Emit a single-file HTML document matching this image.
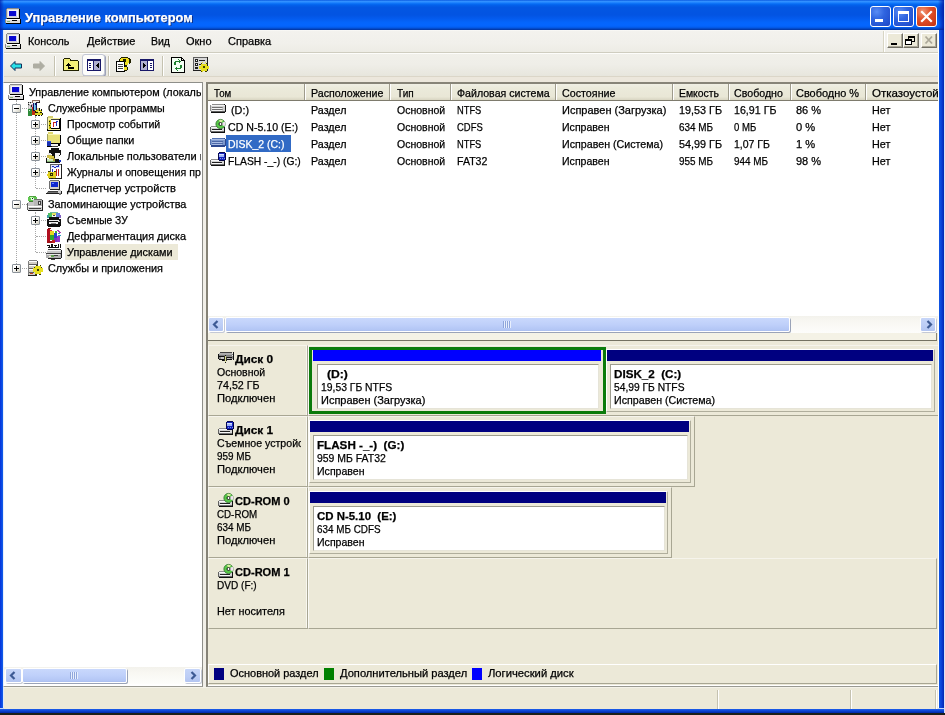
<!DOCTYPE html>
<html lang="ru">
<head>
<meta charset="utf-8">
<title>Управление компьютером</title>
<style>
html,body{margin:0;padding:0;}
body{width:945px;height:715px;overflow:hidden;position:relative;background:#1c1f1a;font-family:"Liberation Sans",sans-serif;font-size:11px;color:#000;line-height:13px;}
div,span,svg{position:absolute;box-sizing:border-box;}
b{font-weight:bold;}
.t{white-space:nowrap;transform-origin:0 50%;-webkit-text-stroke:0.25px currentColor;}
#root{left:0;top:0;width:945px;height:715px;overflow:hidden;will-change:transform;background:#1c1f1a;}
#win{left:0;top:0;width:944px;height:713px;background:#ece9d8;}
#edge{left:944px;top:0;width:1px;height:713px;background:#d4e0f6;}
#title{left:0;top:0;width:944px;height:30px;background:linear-gradient(to bottom,#0958e0 0%,#3391ff 4.5%,#2a8bff 7%,#147bfb 10%,#0569f2 14%,#035de8 19%,#0356e2 25%,#0354e2 50%,#045bee 62%,#0465fb 74%,#0466ff 84%,#0360f4 90%,#0351d8 94%,#0340b4 97%,#0234a0 100%);}
#title .t{left:25px;top:10px;color:#fff;font-weight:bold;font-size:13px;line-height:16px;text-shadow:1px 1px 0 #0a2a80;}
.cb{top:6px;width:21px;height:21px;border:1px solid #fff;border-radius:3px;background:radial-gradient(circle at 30% 25%,#5a8cf4 0,#2f64e0 40%,#1d46c6 100%);}
.cb.cx{background:radial-gradient(circle at 30% 25%,#f09878 0,#e0502a 40%,#c2300e 100%);}
#bl{left:0;top:30px;width:4px;height:683px;background:linear-gradient(to right,#0831d9 0,#0a4fe6 50%,#1660e8 75%,#dfe8fb 76%);}
#br{left:938px;top:30px;width:6px;height:683px;background:linear-gradient(to right,#fff 0,#fff 17%,#1057e4 18%,#0a3fd6 60%,#0326b0 100%);}
#bb{left:0;top:708px;width:944px;height:5px;background:linear-gradient(to bottom,#c0d4f8 0,#c0d4f8 20%,#1c5eea 21%,#0a42d4 60%,#0227a4 100%);}
#menu{left:4px;top:30px;width:934px;height:22px;background:linear-gradient(to bottom,#fbfbf9 0,#f3f2ee 6%,#f1f0eb 60%,#edece5 100%);}
.mi{top:5px;}
.mb{top:3px;width:16px;height:15px;background:#ece9d8;border-top:1px solid #fff;border-left:1px solid #fff;border-right:1px solid #716f64;border-bottom:1px solid #716f64;box-shadow:inset -1px -1px 0 #aca899;}
#tool{left:4px;top:52px;width:934px;height:24px;background:linear-gradient(to bottom,#f1f0ea 0,#efeee8 50%,#e7e6dd 100%);border-top:1px solid #cfcdc0;box-shadow:inset 0 1px 0 #fdfdfb;}
#tool2{left:4px;top:76px;width:934px;height:6px;background:#ece7dc;border-top:1px solid #dbd6c8;}
.ts{top:3px;width:2px;height:20px;border-left:1px solid #c5c2b0;border-right:1px solid #fff;}
.hot{background:#fdfdfb;border:1px solid #c2c6d4;border-radius:3px;box-shadow:1px 1px 0 #9da2b8;}
/* panes */
#tree{left:3px;top:82px;width:200px;height:605px;background:#fff;border-top:1px solid #8e8f8a;border-left:1px solid #e8eefb;border-right:1px solid #8f8f8a;border-bottom:1px solid #9a9a92;overflow:hidden;}
#split{left:203px;top:82px;width:3px;height:605px;background:#f1efe8;}
#rp{left:206px;top:82px;width:732px;height:605px;background:#ece9d8;border-top:2px solid #878478;border-left:2px solid #858276;border-bottom:1px solid #9a9a92;overflow:hidden;}
.tl{height:16px;line-height:16px;}
.ic{width:16px;height:16px;}
.pm{width:9px;height:9px;border:1px solid #8b9299;background:linear-gradient(135deg,#fff 0,#fff 35%,#d2cfc0 100%);border-radius:1px;}
.pm:before{content:"";position:absolute;left:1px;top:3px;width:5px;height:1px;background:#000;}
.pm.p:after{content:"";position:absolute;left:3px;top:1px;width:1px;height:5px;background:#000;}
.dv{width:1px;border-left:1px dotted #a8a8a8;}
.dh{height:1px;border-top:1px dotted #a8a8a8;}
/* scrollbars */
.sb{height:17px;background:linear-gradient(to bottom,#f3f2ec 0,#f8f7f2 30%,#fdfdfb 100%);}
.sbb{top:1px;width:16px;height:15px;border:1px solid #fff;border-radius:2px;background:linear-gradient(to bottom,#c6d5f8 0,#bccdf5 60%,#b2c4f0 100%);box-shadow:1px 1px 0 #c4c9d6;}
.sbt{top:1px;height:15px;border:1px solid #fff;border-radius:2px;background:linear-gradient(to bottom,#c9d8fc 0,#bfd0fa 50%,#b3c6f5 90%,#a9bdee 100%);box-shadow:1px 1px 0 #9aa3b8;}
.grip{top:3px;width:8px;height:7px;background:repeating-linear-gradient(to right,#8fa6dc 0,#8fa6dc 1px,#e8effd 1px,#e8effd 2px);}
/* list */
#lv{left:0;top:0;width:730px;height:249px;background:#fff;}
#lh{left:0;top:0;width:730px;height:17px;background:linear-gradient(to bottom,#f0efe4 0,#ebeadb 25%,#e9e7d6 80%,#d8d5c2 100%);border-bottom:1px solid #7e7b6d;}
.hs{top:0;width:2px;height:16px;border-left:1px solid #9e9b8c;border-right:1px solid #fff;}
.ht{top:2px;line-height:14px;}
.lr{left:0;height:17px;line-height:17px;width:731px;}
.lr .t{top:1px;}
/* disks */
.dlab{overflow:hidden;border-top:1px solid #f6f4ec;border-left:1px solid #f6f4ec;border-bottom:1px solid #a8a693;border-right:1px solid #a8a693;box-shadow:inset -1px 0 0 #f8f7f0;}
.dlab .t{left:8px;}
.dclip{left:0;top:0;width:92px;height:68px;overflow:hidden;}
.dbox{border-top:1px solid #f6f4ec;border-left:1px solid #fbfaf6;border-bottom:1px solid #a8a693;border-right:1px solid #a8a693;}
.part{border-top:1px solid #fff;border-left:1px solid #fff;border-bottom:1px solid #b0ae9c;border-right:1px solid #b0ae9c;}
.pw{background:#fff;border-top:1px solid #9d9c8e;border-left:1px solid #9d9c8e;border-right:1px solid #e6e4d8;border-bottom:1px solid #e6e4d8;}
.pw .t{left:3px;}
#leg{left:0;top:580px;width:729px;height:20px;border-top:1px solid #fff;border-left:1px solid #fff;border-right:1px solid #a8a693;border-bottom:1px solid #a8a693;}
#status{left:4px;top:687px;width:934px;height:22px;background:#ece9d8;border-top:1px solid #f4f2e8;}
#tl{left:0;top:0;width:4px;height:30px;background:linear-gradient(to right,rgba(0,30,170,.75),rgba(0,40,190,0));}
#trr{left:938px;top:0;width:6px;height:30px;background:linear-gradient(to right,rgba(0,30,170,0),rgba(0,25,160,.85));}
</style>
</head>
<body>
<div id="root">
<div id="win"></div>
<div id="edge"></div>
<div id="title">
<div id="tl"></div><div id="trr"></div>
<div class="ic" style="left:5px;top:8px"><svg width="16" height="16" viewBox="0 0 16 16" shape-rendering="crispEdges" style="left:0;top:0" ><rect x="2" y="0" width="12" height="1" fill="#8a8a8a"/><rect x="1" y="1" width="1" height="9" fill="#8a8a8a"/><rect x="2" y="1" width="12" height="9" fill="#d8d8d4"/><rect x="14" y="1" width="1" height="10" fill="#000"/><rect x="3" y="2" width="10" height="7" fill="#f4f4f4"/><rect x="4" y="3" width="7" height="5" fill="#0808d0"/><rect x="11" y="3" width="1" height="5" fill="#c8c8ff"/><rect x="4" y="8" width="8" height="1" fill="#c8c8e0"/><rect x="2" y="10" width="12" height="1" fill="#000"/><rect x="0" y="11" width="1" height="4" fill="#8a8a8a"/><rect x="1" y="11" width="14" height="4" fill="#dcdcdc"/><rect x="1" y="11" width="14" height="1" fill="#fff"/><rect x="15" y="11" width="1" height="5" fill="#000"/><rect x="7" y="12" width="5" height="1" fill="#000"/><rect x="2" y="13" width="3" height="1" fill="#86b070"/><rect x="1" y="15" width="14" height="1" fill="#000"/></svg></div>
<span class="t" style="transform:scaleX(0.988);">Управление компьютером</span>
<div class="cb" style="left:870px"><div style="left:4px;top:12px;width:8px;height:3px;background:#fff"></div></div>
<div class="cb" style="left:893px"><div style="left:4px;top:4px;width:11px;height:11px;border:1px solid #fff;border-top:3px solid #fff"></div></div>
<div class="cb cx" style="left:916px"><svg width="19" height="19" viewBox="0 0 19 19" style="left:0;top:0"><path d="M5 5 L14 14 M14 5 L5 14" stroke="#fff" stroke-width="2.2" stroke-linecap="square"/></svg></div>
</div>
<div id="bl"></div><div id="br"></div><div id="bb"></div>
<div id="menu">
<div class="ic" style="left:1px;top:3px"><svg width="16" height="16" viewBox="0 0 16 16" shape-rendering="crispEdges" style="left:0;top:0" ><rect x="2" y="0" width="12" height="1" fill="#8a8a8a"/><rect x="1" y="1" width="1" height="9" fill="#8a8a8a"/><rect x="2" y="1" width="12" height="9" fill="#d8d8d4"/><rect x="14" y="1" width="1" height="10" fill="#000"/><rect x="3" y="2" width="10" height="7" fill="#f4f4f4"/><rect x="4" y="3" width="7" height="5" fill="#0808d0"/><rect x="11" y="3" width="1" height="5" fill="#c8c8ff"/><rect x="4" y="8" width="8" height="1" fill="#c8c8e0"/><rect x="2" y="10" width="12" height="1" fill="#000"/><rect x="0" y="11" width="1" height="4" fill="#8a8a8a"/><rect x="1" y="11" width="14" height="4" fill="#dcdcdc"/><rect x="1" y="11" width="14" height="1" fill="#fff"/><rect x="15" y="11" width="1" height="5" fill="#000"/><rect x="7" y="12" width="5" height="1" fill="#000"/><rect x="2" y="13" width="3" height="1" fill="#86b070"/><rect x="1" y="15" width="14" height="1" fill="#000"/></svg></div>
<span class="t mi" style="left:24px;transform:scaleX(0.982);">Консоль</span>
<span class="t mi" style="left:83px;">Действие</span>
<span class="t mi" style="left:147px;transform:scaleX(0.954);">Вид</span>
<span class="t mi" style="left:182px;">Окно</span>
<span class="t mi" style="left:224px;">Справка</span>
<div style="left:879px;top:1px;width:2px;height:21px;border-left:1px solid #d8d5c4;border-right:1px solid #fff"></div>
<div class="mb" style="left:883px"><div style="left:3px;top:9px;width:6px;height:2px;background:#000"></div></div>
<div class="mb" style="left:899px"><div style="left:4px;top:2px;width:7px;height:6px;border:1px solid #000;border-top:2px solid #000"></div><div style="left:1px;top:5px;width:7px;height:6px;border:1px solid #000;border-top:2px solid #000;background:#fff"></div></div>
<div class="mb" style="left:917px"><svg width="14" height="12" viewBox="0 0 14 12" style="left:0;top:0"><path d="M3.5 2.5 L10 9.5 M10 2.5 L3.5 9.5" stroke="#aca899" stroke-width="1.8"/></svg></div>
</div>
<div id="tool">
<div style="left:5px;top:7px"><svg width="14" height="12" viewBox="0 0 14 12" style="left:0;top:0"><path d="M6 1.5 L1.5 6 L6 10.5 L6 8 L12.5 8 L12.5 4 L6 4 Z" fill="#28e0e8" stroke="#10305c" stroke-width="1" stroke-linejoin="miter"/></svg></div>
<div style="left:28px;top:7px"><svg width="14" height="12" viewBox="0 0 14 12" style="left:0;top:0"><path d="M8 1.5 L12.5 6 L8 10.5 L8 8 L1.5 8 L1.5 4 L8 4 Z" fill="#aeada2" stroke="#aeada2" stroke-width="1" stroke-linejoin="miter"/></svg></div>
<div class="ts" style="left:50px"></div>
<div style="left:59px;top:4px"><svg width="16" height="14" viewBox="0 0 16 14" shape-rendering="crispEdges" style="left:0;top:0" ><rect x="1" y="1" width="6" height="1" fill="#202000"/><rect x="0" y="2" width="1" height="12" fill="#202000"/><rect x="1" y="2" width="6" height="2" fill="#f0ec70"/><rect x="7" y="2" width="1" height="2" fill="#202000"/><rect x="8" y="3" width="7" height="1" fill="#202000"/><rect x="1" y="4" width="14" height="9" fill="#f4f078"/><rect x="15" y="4" width="1" height="10" fill="#202000"/><rect x="0" y="13" width="16" height="1" fill="#202000"/><rect x="5" y="6" width="1" height="1" fill="#000"/><rect x="4" y="7" width="3" height="1" fill="#000"/><rect x="3" y="8" width="5" height="1" fill="#000"/><rect x="5" y="9" width="1" height="2" fill="#000"/><rect x="5" y="10" width="6" height="1" fill="#000"/><rect x="5" y="11" width="6" height="1" fill="#000"/></svg></div>
<div class="hot" style="left:78px;top:1px;width:23px;height:22px"></div>
<div style="left:83px;top:6px"><svg width="14" height="12" viewBox="0 0 14 12" shape-rendering="crispEdges" style="left:0;top:0" ><rect x="0" y="0" width="14" height="12" fill="#181868"/><rect x="1" y="2" width="5" height="9" fill="#fff"/><rect x="7" y="2" width="6" height="9" fill="#b0b0d0"/><rect x="2" y="4" width="2" height="1" fill="#181868"/><rect x="2" y="6" width="2" height="1" fill="#181868"/><rect x="2" y="8" width="2" height="1" fill="#181868"/><rect x="11" y="4" width="1" height="5" fill="#000"/><rect x="10" y="5" width="1" height="3" fill="#000"/><rect x="9" y="6" width="1" height="1" fill="#000"/></svg></div>
<div class="ts" style="left:104px"></div>
<div style="left:112px;top:4px"><svg width="15" height="15" viewBox="0 0 15 15" shape-rendering="crispEdges" style="left:0;top:0" ><rect x="5" y="0" width="7" height="1" fill="#202000"/><rect x="4" y="1" width="9" height="1" fill="#202000"/><rect x="5" y="1" width="7" height="1" fill="#f0e020"/><rect x="4" y="2" width="3" height="2" fill="#f0e020"/><rect x="10" y="2" width="4" height="4" fill="#f0e020"/><rect x="8" y="5" width="4" height="3" fill="#f0e020"/><rect x="8" y="8" width="3" height="1" fill="#202000"/><rect x="7" y="2" width="3" height="3" fill="#202000"/><rect x="13" y="1" width="1" height="6" fill="#202000"/><rect x="14" y="2" width="1" height="4" fill="#202000"/><rect x="3" y="2" width="1" height="3" fill="#202000"/><rect x="8" y="10" width="3" height="3" fill="#f0e020"/><rect x="8" y="13" width="3" height="1" fill="#202000"/><rect x="11" y="10" width="1" height="3" fill="#202000"/><rect x="8" y="9" width="3" height="1" fill="#202000"/><rect x="0" y="4" width="8" height="11" fill="#fff"/><rect x="0" y="4" width="8" height="1" fill="#000"/><rect x="0" y="4" width="1" height="11" fill="#000"/><rect x="0" y="14" width="9" height="1" fill="#000"/><rect x="8" y="5" width="1" height="5" fill="#000"/><rect x="2" y="7" width="5" height="1" fill="#404040"/><rect x="2" y="9" width="5" height="1" fill="#404040"/><rect x="2" y="11" width="5" height="1" fill="#404040"/></svg></div>
<div style="left:136px;top:6px"><svg width="14" height="12" viewBox="0 0 14 12" shape-rendering="crispEdges" style="left:0;top:0" ><rect x="0" y="0" width="14" height="12" fill="#181868"/><rect x="8" y="2" width="5" height="9" fill="#fff"/><rect x="1" y="2" width="6" height="9" fill="#b0b0d0"/><rect x="10" y="4" width="2" height="1" fill="#181868"/><rect x="10" y="6" width="2" height="1" fill="#181868"/><rect x="10" y="8" width="2" height="1" fill="#181868"/><rect x="3" y="4" width="1" height="5" fill="#000"/><rect x="4" y="5" width="1" height="3" fill="#000"/><rect x="5" y="6" width="1" height="1" fill="#000"/></svg></div>
<div class="ts" style="left:158px"></div>
<div style="left:167px;top:4px"><svg width="14" height="16" viewBox="0 0 14 16" shape-rendering="crispEdges" style="left:0;top:0" ><rect x="0" y="0" width="10" height="1" fill="#000"/><rect x="0" y="0" width="1" height="16" fill="#000"/><rect x="0" y="15" width="14" height="1" fill="#000"/><rect x="13" y="3" width="1" height="13" fill="#000"/><rect x="1" y="1" width="9" height="14" fill="#f4fff4"/><rect x="10" y="3" width="3" height="12" fill="#f4fff4"/><rect x="10" y="0" width="1" height="3" fill="#000"/><rect x="10" y="3" width="3" height="1" fill="#000"/><rect x="11" y="1" width="1" height="1" fill="#000"/><rect x="12" y="2" width="1" height="1" fill="#000"/><rect x="4" y="4" width="5" height="1" fill="#208030"/><rect x="3" y="5" width="2" height="3" fill="#208030"/><rect x="8" y="3" width="1" height="3" fill="#208030"/><rect x="9" y="4" width="1" height="1" fill="#208030"/><rect x="7" y="2" width="1" height="1" fill="#208030"/><rect x="5" y="11" width="5" height="1" fill="#208030"/><rect x="9" y="8" width="2" height="3" fill="#208030"/><rect x="5" y="10" width="1" height="3" fill="#208030"/><rect x="4" y="11" width="1" height="1" fill="#208030"/><rect x="6" y="13" width="1" height="1" fill="#208030"/></svg></div>
<div style="left:189px;top:4px"><svg width="16" height="16" viewBox="0 0 16 16" shape-rendering="crispEdges" style="left:0;top:0" ><rect x="0" y="0" width="14" height="1" fill="#606060"/><rect x="0" y="0" width="1" height="14" fill="#606060"/><rect x="1" y="1" width="13" height="12" fill="#d8d8d8"/><rect x="14" y="0" width="1" height="14" fill="#202020"/><rect x="0" y="13" width="15" height="1" fill="#202020"/><rect x="2" y="2" width="3" height="3" fill="#202020"/><rect x="3" y="3" width="1" height="1" fill="#fff"/><rect x="6" y="3" width="6" height="1" fill="#202020"/><rect x="2" y="6" width="3" height="3" fill="#202020"/><rect x="3" y="7" width="1" height="1" fill="#fff"/><rect x="6" y="7" width="3" height="1" fill="#202020"/><rect x="2" y="10" width="3" height="2" fill="#202020"/><rect x="8" y="7" width="6" height="7" fill="#e8e020"/><rect x="6" y="9" width="10" height="3" fill="#e8e020"/><rect x="10" y="9" width="2" height="2" fill="#404000"/><rect x="8" y="6" width="1" height="1" fill="#404000"/><rect x="13" y="6" width="1" height="1" fill="#404000"/><rect x="8" y="14" width="2" height="1" fill="#404000"/><rect x="12" y="14" width="2" height="1" fill="#404000"/><rect x="9" y="5" width="1" height="1" fill="#e8e020"/><rect x="12" y="5" width="1" height="1" fill="#e8e020"/><rect x="9" y="14" width="1" height="1" fill="#e8e020"/></svg></div>
</div>
<div id="tool2"></div>
<div id="tree">
<div class="dv" style="left:12px;top:17px;height:168px"></div>
<div class="dv" style="left:31px;top:33px;height:72px"></div>
<div class="dv" style="left:31px;top:129px;height:40px"></div>
<div class="ic" style="left:4px;top:1px"><svg width="16" height="16" viewBox="0 0 16 16" shape-rendering="crispEdges" style="left:0;top:0" ><rect x="2" y="0" width="12" height="1" fill="#8a8a8a"/><rect x="1" y="1" width="1" height="9" fill="#8a8a8a"/><rect x="2" y="1" width="12" height="9" fill="#d8d8d4"/><rect x="14" y="1" width="1" height="10" fill="#000"/><rect x="3" y="2" width="10" height="7" fill="#f4f4f4"/><rect x="4" y="3" width="7" height="5" fill="#0808d0"/><rect x="11" y="3" width="1" height="5" fill="#c8c8ff"/><rect x="4" y="8" width="8" height="1" fill="#c8c8e0"/><rect x="2" y="10" width="12" height="1" fill="#000"/><rect x="0" y="11" width="1" height="4" fill="#8a8a8a"/><rect x="1" y="11" width="14" height="4" fill="#dcdcdc"/><rect x="1" y="11" width="14" height="1" fill="#fff"/><rect x="15" y="11" width="1" height="5" fill="#000"/><rect x="7" y="12" width="5" height="1" fill="#000"/><rect x="2" y="13" width="3" height="1" fill="#86b070"/><rect x="1" y="15" width="14" height="1" fill="#000"/></svg></div>
<span class="t tl" style="left:25px;top:1px;transform:scaleX(0.98);">Управление компьютером (локальный)</span>
<div class="dh" style="left:13px;top:25px;width:10px"></div>
<div class="pm" style="left:8px;top:21px"></div>
<div class="ic" style="left:23px;top:17px"><svg width="16" height="16" viewBox="0 0 16 16" shape-rendering="crispEdges" style="left:0;top:0" ><rect x="1" y="9" width="4" height="7" fill="#2e8a3a"/><rect x="2" y="10" width="1" height="1" fill="#d0f0d0"/><rect x="1" y="2" width="4" height="7" fill="#b8b8b8"/><rect x="1" y="2" width="1" height="1" fill="#202020"/><rect x="3" y="2" width="1" height="1" fill="#202020"/><rect x="2" y="3" width="1" height="1" fill="#fff"/><rect x="4" y="3" width="1" height="1" fill="#fff"/><rect x="1" y="4" width="1" height="1" fill="#202020"/><rect x="3" y="4" width="1" height="1" fill="#fff"/><rect x="4" y="5" width="1" height="2" fill="#202020"/><rect x="2" y="6" width="1" height="2" fill="#e8e8e8"/><rect x="5" y="7" width="3" height="8" fill="#c03010"/><rect x="6" y="8" width="1" height="1" fill="#fff"/><rect x="5" y="4" width="1" height="3" fill="#d8a0c0"/><rect x="6" y="2" width="4" height="9" fill="#101058"/><rect x="7" y="3" width="1" height="7" fill="#80d0f0"/><rect x="8" y="5" width="1" height="5" fill="#58a8d0"/><rect x="5" y="0" width="8" height="1" fill="#8a6a5a"/><rect x="5" y="1" width="8" height="2" fill="#f4ece4"/><rect x="12" y="1" width="1" height="2" fill="#4a3a30"/><rect x="9" y="2" width="4" height="1" fill="#2a2020"/><rect x="5" y="1" width="1" height="2" fill="#8a6a5a"/><rect x="8" y="10" width="7" height="5" fill="#d8d428"/><rect x="10" y="8" width="2" height="2" fill="#d8c880"/><rect x="12" y="8" width="1" height="3" fill="#181800"/><rect x="14" y="9" width="1" height="2" fill="#181800"/><rect x="9" y="12" width="2" height="1" fill="#181800"/><rect x="13" y="12" width="2" height="1" fill="#181800"/><rect x="11" y="11" width="2" height="1" fill="#f0f090"/><rect x="15" y="13" width="1" height="2" fill="#181800"/><rect x="8" y="15" width="2" height="1" fill="#181800"/><rect x="11" y="15" width="2" height="1" fill="#181800"/><rect x="14" y="15" width="1" height="1" fill="#181800"/><rect x="8" y="11" width="1" height="2" fill="#181800"/></svg></div>
<span class="t tl" style="left:44px;top:17px;transform:scaleX(0.971);">Служебные программы</span>
<div class="dh" style="left:32px;top:41px;width:10px"></div>
<div class="pm p" style="left:27px;top:37px"></div>
<div class="ic" style="left:42px;top:33px"><svg width="16" height="16" viewBox="0 0 16 16" shape-rendering="crispEdges" style="left:0;top:0" ><rect x="2" y="0" width="5" height="2" fill="#d8d070"/><rect x="1" y="2" width="13" height="12" fill="#f4f0a0"/><rect x="1" y="2" width="1" height="12" fill="#808060"/><rect x="14" y="2" width="1" height="13" fill="#000"/><rect x="1" y="1" width="1" height="1" fill="#808060"/><rect x="2" y="14" width="13" height="1" fill="#000"/><rect x="1" y="13" width="1" height="2" fill="#000"/><rect x="3" y="4" width="2" height="9" fill="#c8b800"/><rect x="3" y="5" width="1" height="1" fill="#202000"/><rect x="4" y="7" width="1" height="1" fill="#202000"/><rect x="3" y="9" width="1" height="1" fill="#202000"/><rect x="4" y="11" width="1" height="1" fill="#202000"/><rect x="5" y="4" width="8" height="8" fill="#fff"/><rect x="5" y="3" width="8" height="1" fill="#404040"/><rect x="5" y="12" width="9" height="1" fill="#000"/><rect x="13" y="3" width="1" height="10" fill="#000"/><rect x="7" y="6" width="1" height="5" fill="#d02020"/><rect x="8" y="6" width="2" height="1" fill="#d02020"/><rect x="10" y="5" width="1" height="5" fill="#2030c0"/><rect x="11" y="5" width="1" height="1" fill="#2030c0"/></svg></div>
<span class="t tl" style="left:63px;top:33px;transform:scaleX(0.966);">Просмотр событий</span>
<div class="dh" style="left:32px;top:57px;width:10px"></div>
<div class="pm p" style="left:27px;top:53px"></div>
<div class="ic" style="left:42px;top:49px"><svg width="16" height="16" viewBox="0 0 16 16" shape-rendering="crispEdges" style="left:0;top:0" ><rect x="2" y="0" width="5" height="2" fill="#e0d870"/><rect x="2" y="2" width="12" height="9" fill="#e8e078"/><rect x="2" y="2" width="12" height="1" fill="#f8f4b0"/><rect x="14" y="3" width="1" height="9" fill="#000"/><rect x="1" y="2" width="1" height="9" fill="#a0a060"/><rect x="1" y="9" width="4" height="5" fill="#1830b0"/><rect x="1" y="9" width="4" height="1" fill="#3050e0"/><rect x="5" y="11" width="9" height="1" fill="#000"/><rect x="5" y="12" width="7" height="2" fill="#f0f0f0"/><rect x="6" y="14" width="6" height="1" fill="#404040"/><rect x="12" y="12" width="2" height="2" fill="#000"/><rect x="1" y="14" width="5" height="1" fill="#000"/></svg></div>
<span class="t tl" style="left:63px;top:49px;transform:scaleX(0.988);">Общие папки</span>
<div class="dh" style="left:32px;top:73px;width:10px"></div>
<div class="pm p" style="left:27px;top:69px"></div>
<div class="ic" style="left:42px;top:65px"><svg width="16" height="16" viewBox="0 0 16 16" shape-rendering="crispEdges" style="left:0;top:0" ><rect x="5" y="0" width="8" height="3" fill="#101010"/><rect x="3" y="2" width="4" height="4" fill="#101010"/><rect x="11" y="2" width="4" height="5" fill="#101010"/><rect x="7" y="3" width="4" height="2" fill="#101010"/><rect x="8" y="5" width="5" height="6" fill="#f4f4f4"/><rect x="12" y="5" width="2" height="3" fill="#f4f4f4"/><rect x="13" y="7" width="1" height="1" fill="#202020"/><rect x="6" y="5" width="3" height="5" fill="#101010"/><rect x="2" y="5" width="3" height="2" fill="#e8e8e8"/><rect x="1" y="7" width="5" height="3" fill="#c8b850"/><rect x="3" y="8" width="5" height="4" fill="#d8c840"/><rect x="5" y="10" width="4" height="3" fill="#b0a030"/><rect x="1" y="11" width="6" height="3" fill="#d0e8c0"/><rect x="1" y="13" width="8" height="1" fill="#7fb070"/><rect x="9" y="11" width="4" height="3" fill="#101010"/><rect x="13" y="12" width="2" height="2" fill="#1830c0"/><rect x="1" y="14" width="13" height="1" fill="#101010"/><rect x="0" y="10" width="1" height="5" fill="#101010"/></svg></div>
<span class="t tl" style="left:63px;top:65px;">Локальные пользователи и группы</span>
<div class="dh" style="left:32px;top:89px;width:10px"></div>
<div class="pm p" style="left:27px;top:85px"></div>
<div class="ic" style="left:42px;top:81px"><svg width="16" height="16" viewBox="0 0 16 16" shape-rendering="crispEdges" style="left:0;top:0" ><rect x="4" y="0" width="11" height="14" fill="#fff"/><rect x="4" y="0" width="11" height="1" fill="#606060"/><rect x="4" y="0" width="1" height="14" fill="#606060"/><rect x="15" y="0" width="1" height="15" fill="#202020"/><rect x="5" y="14" width="10" height="1" fill="#202020"/><rect x="5" y="1" width="9" height="3" fill="#dfe4ff"/><rect x="6" y="2" width="2" height="1" fill="#2030c0"/><rect x="8" y="3" width="2" height="1" fill="#2030c0"/><rect x="10" y="2" width="2" height="1" fill="#2030c0"/><rect x="12" y="1" width="1" height="2" fill="#2030c0"/><rect x="10" y="5" width="1" height="7" fill="#c02020"/><rect x="12" y="5" width="1" height="7" fill="#c02020"/><rect x="6" y="5" width="1" height="4" fill="#2030c0"/><rect x="2" y="8" width="8" height="6" fill="#e0d020"/><rect x="1" y="10" width="2" height="2" fill="#e0d020"/><rect x="4" y="9" width="3" height="3" fill="#303000"/><rect x="5" y="10" width="1" height="1" fill="#e0d020"/><rect x="3" y="14" width="2" height="1" fill="#404000"/><rect x="7" y="14" width="2" height="1" fill="#404000"/><rect x="2" y="7" width="2" height="1" fill="#404000"/><rect x="8" y="7" width="2" height="1" fill="#404000"/></svg></div>
<span class="t tl" style="left:63px;top:81px;transform:scaleX(0.965);">Журналы и оповещения производительности</span>
<div class="dh" style="left:32px;top:105px;width:10px"></div>
<div class="ic" style="left:42px;top:97px"><svg width="16" height="16" viewBox="0 0 16 16" shape-rendering="crispEdges" style="left:0;top:0" ><rect x="4" y="0" width="9" height="1" fill="#707070"/><rect x="3" y="1" width="1" height="8" fill="#707070"/><rect x="4" y="1" width="9" height="8" fill="#d4d0c8"/><rect x="13" y="1" width="1" height="8" fill="#202020"/><rect x="5" y="2" width="7" height="5" fill="#1028d0"/><rect x="6" y="3" width="2" height="1" fill="#6080ff"/><rect x="4" y="9" width="10" height="1" fill="#202020"/><rect x="2" y="10" width="12" height="1" fill="#fff"/><rect x="1" y="11" width="13" height="2" fill="#e8e8e8"/><rect x="2" y="11" width="10" height="1" fill="#404040"/><rect x="1" y="12" width="11" height="1" fill="#707070"/><rect x="0" y="13" width="13" height="1" fill="#202020"/><rect x="12" y="10" width="3" height="3" fill="#d0d0d0"/><rect x="13" y="13" width="2" height="2" fill="#808080"/><rect x="15" y="11" width="1" height="3" fill="#202020"/></svg></div>
<span class="t tl" style="left:63px;top:97px;transform:scaleX(1.014);">Диспетчер устройств</span>
<div class="dh" style="left:13px;top:121px;width:10px"></div>
<div class="pm" style="left:8px;top:117px"></div>
<div class="ic" style="left:23px;top:113px"><svg width="16" height="16" viewBox="0 0 16 16" shape-rendering="crispEdges" style="left:0;top:0" ><rect x="2" y="0" width="7" height="1" fill="#50a040"/><rect x="1" y="1" width="9" height="4" fill="#60c850"/><rect x="2" y="5" width="7" height="1" fill="#408030"/><rect x="4" y="2" width="3" height="2" fill="#e0ffe0"/><rect x="5" y="2" width="1" height="1" fill="#202020"/><rect x="3" y="1" width="3" height="1" fill="#c0ffb0"/><rect x="7" y="3" width="8" height="1" fill="#707070"/><rect x="6" y="4" width="9" height="6" fill="#b8b8b8"/><rect x="15" y="4" width="1" height="10" fill="#202020"/><rect x="11" y="5" width="3" height="4" fill="#404040"/><rect x="12" y="6" width="1" height="2" fill="#e0e0e0"/><rect x="1" y="6" width="6" height="4" fill="#c8c8c8"/><rect x="0" y="7" width="1" height="7" fill="#606060"/><rect x="1" y="10" width="14" height="1" fill="#fff"/><rect x="1" y="11" width="14" height="3" fill="#d0d0d0"/><rect x="2" y="12" width="12" height="1" fill="#404040"/><rect x="1" y="14" width="15" height="1" fill="#202020"/></svg></div>
<span class="t tl" style="left:44px;top:113px;transform:scaleX(0.988);">Запоминающие устройства</span>
<div class="dh" style="left:32px;top:137px;width:10px"></div>
<div class="pm p" style="left:27px;top:133px"></div>
<div class="ic" style="left:42px;top:129px"><svg width="16" height="16" viewBox="0 0 16 16" shape-rendering="crispEdges" style="left:0;top:0" ><rect x="4" y="0" width="8" height="1" fill="#70b8a0"/><rect x="2" y="1" width="4" height="4" fill="#50c060"/><rect x="6" y="1" width="4" height="4" fill="#e8e060"/><rect x="10" y="1" width="4" height="4" fill="#6080e0"/><rect x="13" y="3" width="2" height="3" fill="#8060c0"/><rect x="1" y="3" width="2" height="3" fill="#40a0a0"/><rect x="6" y="3" width="4" height="2" fill="#f8f8f8"/><rect x="7" y="3" width="2" height="1" fill="#404040"/><rect x="3" y="5" width="10" height="2" fill="#101010"/><rect x="1" y="7" width="14" height="7" fill="#101010"/><rect x="3" y="8" width="10" height="1" fill="#f0f0f0"/><rect x="3" y="10" width="9" height="2" fill="#f0f0f0"/><rect x="5" y="11" width="5" height="1" fill="#808080"/><rect x="2" y="14" width="12" height="1" fill="#101010"/><rect x="12" y="9" width="2" height="1" fill="#c0c0c0"/></svg></div>
<span class="t tl" style="left:63px;top:129px;transform:scaleX(0.931);">Съемные ЗУ</span>
<div class="dh" style="left:32px;top:153px;width:10px"></div>
<div class="ic" style="left:42px;top:145px"><svg width="16" height="16" viewBox="0 0 16 16" shape-rendering="crispEdges" style="left:0;top:0" ><rect x="1" y="1" width="3" height="12" fill="#b01020"/><rect x="4" y="2" width="2" height="4" fill="#d83030"/><rect x="1" y="13" width="6" height="2" fill="#a01018"/><rect x="2" y="0" width="3" height="1" fill="#701010"/><rect x="4" y="3" width="4" height="4" fill="#e8d820"/><rect x="4" y="7" width="4" height="5" fill="#30a830"/><rect x="8" y="5" width="3" height="5" fill="#2840d0"/><rect x="8" y="10" width="4" height="4" fill="#8030c0"/><rect x="6" y="12" width="3" height="3" fill="#c02020"/><rect x="11" y="8" width="3" height="6" fill="#9038c8"/><rect x="11" y="2" width="2" height="1" fill="#b040b0"/><rect x="12" y="3" width="2" height="1" fill="#b040b0"/><rect x="13" y="4" width="2" height="1" fill="#b040b0"/><rect x="12" y="5" width="2" height="1" fill="#30a0a0"/><rect x="12" y="7" width="3" height="1" fill="#30a0c0"/><rect x="9" y="3" width="2" height="2" fill="#40b040"/></svg></div>
<span class="t tl" style="left:63px;top:145px;transform:scaleX(0.989);">Дефрагментация диска</span>
<div class="dh" style="left:32px;top:169px;width:10px"></div>
<div class="ic" style="left:42px;top:161px"><svg width="16" height="16" viewBox="0 0 16 16" shape-rendering="crispEdges" style="left:0;top:0" ><rect x="1" y="1" width="3" height="1" fill="#101010"/><rect x="5" y="0" width="2" height="3" fill="#101010"/><rect x="8" y="1" width="3" height="1" fill="#101010"/><rect x="12" y="0" width="1" height="4" fill="#101010"/><rect x="14" y="0" width="1" height="4" fill="#101010"/><rect x="2" y="3" width="10" height="1" fill="#101010"/><rect x="3" y="2" width="1" height="1" fill="#101010"/><rect x="9" y="2" width="1" height="1" fill="#101010"/><rect x="2" y="5" width="13" height="1" fill="#404040"/><rect x="1" y="6" width="14" height="3" fill="#c8c8c8"/><rect x="1" y="6" width="14" height="1" fill="#f0f0f0"/><rect x="15" y="6" width="1" height="8" fill="#202020"/><rect x="0" y="9" width="15" height="1" fill="#404040"/><rect x="0" y="10" width="15" height="4" fill="#b0b0b0"/><rect x="1" y="10" width="13" height="1" fill="#e8e8e8"/><rect x="5" y="11" width="3" height="2" fill="#60a050"/><rect x="8" y="11" width="4" height="1" fill="#404040"/><rect x="3" y="12" width="2" height="1" fill="#f0f0d0"/><rect x="2" y="14" width="13" height="1" fill="#202020"/><rect x="5" y="15" width="4" height="1" fill="#404040"/></svg></div>
<div style="left:61px;top:161px;width:113px;height:16px;background:#ece9d8"></div>
<span class="t tl" style="left:63px;top:161px;transform:scaleX(0.985);">Управление дисками</span>
<div class="dh" style="left:13px;top:185px;width:10px"></div>
<div class="pm p" style="left:8px;top:181px"></div>
<div class="ic" style="left:23px;top:177px"><svg width="16" height="16" viewBox="0 0 16 16" shape-rendering="crispEdges" style="left:0;top:0" ><rect x="2" y="0" width="8" height="1" fill="#808080"/><rect x="1" y="1" width="1" height="14" fill="#808080"/><rect x="2" y="1" width="8" height="14" fill="#d4d0c8"/><rect x="10" y="1" width="1" height="6" fill="#404040"/><rect x="2" y="1" width="8" height="1" fill="#fff"/><rect x="2" y="4" width="8" height="1" fill="#606060"/><rect x="2" y="5" width="8" height="1" fill="#fff"/><rect x="2" y="8" width="6" height="1" fill="#606060"/><rect x="2" y="9" width="6" height="1" fill="#fff"/><rect x="2" y="12" width="5" height="1" fill="#606060"/><rect x="3" y="13" width="3" height="1" fill="#c04020"/><rect x="1" y="15" width="9" height="1" fill="#202020"/><rect x="8" y="6" width="6" height="8" fill="#e8e020"/><rect x="6" y="8" width="10" height="4" fill="#e8e020"/><rect x="10" y="9" width="2" height="2" fill="#404000"/><rect x="9" y="5" width="1" height="1" fill="#404000"/><rect x="13" y="5" width="1" height="1" fill="#404000"/><rect x="8" y="14" width="2" height="1" fill="#404000"/><rect x="12" y="14" width="2" height="1" fill="#404000"/><rect x="7" y="7" width="1" height="1" fill="#404000"/><rect x="14" y="7" width="1" height="1" fill="#404000"/></svg></div>
<span class="t tl" style="left:44px;top:177px;transform:scaleX(0.987);">Службы и приложения</span>
<div style="left:197px;top:0;width:1px;height:584px;background:#fff"></div>
<div class="sb" style="left:0px;top:584px;width:198px"><div class="sbb" style="left:1px;width:17px"><svg width="8" height="9" viewBox="0 0 8 9" style="left:3px;top:2px"><path d="M5.5 1 L2 4.5 L5.5 8" fill="none" stroke="#3d5a94" stroke-width="2.2"/></svg></div><div class="sbt" style="left:18px;width:105px"><div class="grip" style="left:47px"></div></div><div class="sbb" style="left:180px;width:17px"><svg width="8" height="9" viewBox="0 0 8 9" style="left:4px;top:2px"><path d="M2.5 1 L6 4.5 L2.5 8" fill="none" stroke="#3d5a94" stroke-width="2.2"/></svg></div></div>
</div>
<div id="split"></div>
<div id="rp">
<div id="lv">
<div id="lh">
<span class="t ht" style="left:6px;transform:scaleX(0.88);">Том</span>
<span class="t ht" style="left:103px;transform:scaleX(0.969);">Расположение</span>
<span class="t ht" style="left:189px;transform:scaleX(0.91);">Тип</span>
<span class="t ht" style="left:249px;transform:scaleX(0.965);">Файловая система</span>
<span class="t ht" style="left:354px;transform:scaleX(0.975);">Состояние</span>
<span class="t ht" style="left:471px;transform:scaleX(0.947);">Емкость</span>
<span class="t ht" style="left:526px;transform:scaleX(0.967);">Свободно</span>
<span class="t ht" style="left:588px;transform:scaleX(0.995);">Свободно %</span>
<span class="t ht" style="left:664px;transform:scaleX(1.05);">Отказоустойчивость</span>
<div class="hs" style="left:96px"></div>
<div class="hs" style="left:181px"></div>
<div class="hs" style="left:242px"></div>
<div class="hs" style="left:347px"></div>
<div class="hs" style="left:464px"></div>
<div class="hs" style="left:520px"></div>
<div class="hs" style="left:582px"></div>
<div class="hs" style="left:657px"></div>
</div>
<div class="lr" style="top:17px">
<div class="ic" style="left:2px;top:0px"><svg width="16" height="16" viewBox="0 0 16 16" shape-rendering="crispEdges" style="left:0;top:0" ><rect x="2" y="3" width="12" height="1" fill="#8c8c8c"/><rect x="1" y="4" width="14" height="1" fill="#f4f4f4"/><rect x="1" y="5" width="14" height="5" fill="#d0d0d0"/><rect x="0" y="4" width="1" height="6" fill="#8c8c8c"/><rect x="15" y="4" width="1" height="7" fill="#101010"/><rect x="14" y="3" width="1" height="1" fill="#101010"/><rect x="2" y="6" width="10" height="1" fill="#707070"/><rect x="2" y="7" width="10" height="1" fill="#f4f4f4"/><rect x="2" y="8" width="10" height="1" fill="#707070"/><rect x="2" y="9" width="10" height="1" fill="#f4f4f4"/><rect x="12" y="6" width="1" height="1" fill="#909090"/><rect x="12" y="8" width="1" height="1" fill="#909090"/><rect x="1" y="10" width="14" height="1" fill="#606060"/><rect x="1" y="11" width="14" height="1" fill="#101010"/></svg></div>
<span class="t" style="left:23px;transform:scaleX(0.982);">(D:)</span>
<span class="t" style="left:103px;transform:scaleX(0.974);">Раздел</span>
<span class="t" style="left:189px;transform:scaleX(0.956);">Основной</span>
<span class="t" style="left:249px;transform:scaleX(0.846);">NTFS</span>
<span class="t" style="left:354px;">Исправен (Загрузка)</span>
<span class="t" style="left:471px;transform:scaleX(0.983);">19,53 ГБ</span>
<span class="t" style="left:526px;transform:scaleX(0.969);">16,91 ГБ</span>
<span class="t" style="left:588px;">86 %</span>
<span class="t" style="left:664px;transform:scaleX(0.982);">Нет</span>
</div>
<div class="lr" style="top:34px">
<div class="ic" style="left:2px;top:0px"><svg width="16" height="16" viewBox="0 0 16 16" shape-rendering="crispEdges" style="left:0;top:0" ><rect x="1" y="8" width="8" height="1" fill="#909090"/><rect x="0" y="9" width="1" height="5" fill="#606060"/><rect x="1" y="9" width="13" height="1" fill="#f8f8f8"/><rect x="1" y="10" width="13" height="3" fill="#d4d4d4"/><rect x="14" y="9" width="1" height="6" fill="#101010"/><rect x="2" y="11" width="10" height="1" fill="#202020"/><rect x="2" y="12" width="10" height="1" fill="#f8f8f8"/><rect x="1" y="13" width="13" height="1" fill="#707070"/><rect x="1" y="14" width="14" height="1" fill="#101010"/><g shape-rendering="auto"><circle cx="10.5" cy="6" r="4.6" fill="#58c848" stroke="#30702c" stroke-width="0.8"/><path d="M10.5 6 L14.5 3.4 A3.9999999999999996 3.9999999999999996 0 0 1 14.299999999999999 8.2 Z" fill="#f0e4f0"/><path d="M10.5 6 L9.0 2.1000000000000005 A3.9999999999999996 3.9999999999999996 0 0 1 13.0 2.4000000000000004 Z" fill="#d8f0a0"/><circle cx="10.5" cy="6" r="1.5" fill="#fff" stroke="#101010" stroke-width="0.9"/></g></svg></div>
<span class="t" style="left:20px;transform:scaleX(0.964);">CD N-5.10 (E:)</span>
<span class="t" style="left:103px;transform:scaleX(0.974);">Раздел</span>
<span class="t" style="left:189px;transform:scaleX(0.956);">Основной</span>
<span class="t" style="left:249px;transform:scaleX(0.858);">CDFS</span>
<span class="t" style="left:354px;transform:scaleX(0.961);">Исправен</span>
<span class="t" style="left:471px;transform:scaleX(0.902);">634 МБ</span>
<span class="t" style="left:526px;transform:scaleX(0.868);">0 МБ</span>
<span class="t" style="left:588px;transform:scaleX(1.012);">0 %</span>
<span class="t" style="left:664px;transform:scaleX(0.982);">Нет</span>
</div>
<div class="lr" style="top:51px">
<div class="ic" style="left:2px;top:0px"><svg width="16" height="16" viewBox="0 0 16 16" shape-rendering="crispEdges" style="left:0;top:0" ><rect x="2" y="3" width="12" height="1" fill="#5070b0"/><rect x="1" y="4" width="14" height="1" fill="#a8bce4"/><rect x="1" y="5" width="14" height="5" fill="#7c98cc"/><rect x="0" y="4" width="1" height="6" fill="#5070b0"/><rect x="15" y="4" width="1" height="7" fill="#2c4890"/><rect x="14" y="3" width="1" height="1" fill="#2c4890"/><rect x="2" y="6" width="10" height="1" fill="#4c68a8"/><rect x="2" y="7" width="10" height="1" fill="#a8bce4"/><rect x="2" y="8" width="10" height="1" fill="#4c68a8"/><rect x="2" y="9" width="10" height="1" fill="#a8bce4"/><rect x="12" y="6" width="1" height="1" fill="#4c68a8"/><rect x="12" y="8" width="1" height="1" fill="#4c68a8"/><rect x="1" y="10" width="14" height="1" fill="#2c4890"/><rect x="1" y="11" width="14" height="1" fill="#2c4890"/></svg></div>
<div style="left:18px;top:0px;width:65px;height:17px;background:#316ac5"></div>
<span class="t" style="left:20px;color:#fff;transform:scaleX(0.951);">DISK_2 (C:)</span>
<span class="t" style="left:103px;transform:scaleX(0.974);">Раздел</span>
<span class="t" style="left:189px;transform:scaleX(0.956);">Основной</span>
<span class="t" style="left:249px;transform:scaleX(0.846);">NTFS</span>
<span class="t" style="left:354px;transform:scaleX(0.97);">Исправен (Система)</span>
<span class="t" style="left:471px;transform:scaleX(0.983);">54,99 ГБ</span>
<span class="t" style="left:526px;transform:scaleX(0.954);">1,07 ГБ</span>
<span class="t" style="left:588px;transform:scaleX(1.012);">1 %</span>
<span class="t" style="left:664px;transform:scaleX(0.982);">Нет</span>
</div>
<div class="lr" style="top:68px">
<div class="ic" style="left:2px;top:0px"><svg width="16" height="16" viewBox="0 0 16 16" shape-rendering="crispEdges" style="left:0;top:0" ><rect x="1" y="7" width="8" height="1" fill="#909090"/><rect x="0" y="8" width="1" height="5" fill="#606060"/><rect x="1" y="8" width="13" height="1" fill="#f8f8f8"/><rect x="1" y="9" width="13" height="3" fill="#d4d4d4"/><rect x="14" y="8" width="1" height="6" fill="#101010"/><rect x="2" y="10" width="10" height="1" fill="#202020"/><rect x="2" y="11" width="10" height="1" fill="#f8f8f8"/><rect x="1" y="12" width="13" height="1" fill="#707070"/><rect x="1" y="13" width="14" height="1" fill="#101010"/><rect x="9" y="0" width="6" height="1" fill="#080850"/><rect x="8" y="1" width="1" height="7" fill="#080850"/><rect x="9" y="1" width="6" height="7" fill="#1424c0"/><rect x="15" y="1" width="1" height="7" fill="#000040"/><rect x="9" y="2" width="5" height="3" fill="#a0b4f8"/><rect x="9" y="2" width="5" height="1" fill="#d4e0ff"/><rect x="9" y="8" width="6" height="1" fill="#000040"/><rect x="10" y="6" width="1" height="1" fill="#8090e0"/><rect x="12" y="6" width="1" height="1" fill="#8090e0"/><rect x="14" y="6" width="1" height="1" fill="#8090e0"/></svg></div>
<span class="t" style="left:20px;transform:scaleX(0.938);">FLASH -_-) (G:)</span>
<span class="t" style="left:103px;transform:scaleX(0.974);">Раздел</span>
<span class="t" style="left:189px;transform:scaleX(0.956);">Основной</span>
<span class="t" style="left:249px;transform:scaleX(0.962);">FAT32</span>
<span class="t" style="left:354px;transform:scaleX(0.961);">Исправен</span>
<span class="t" style="left:471px;transform:scaleX(0.902);">955 МБ</span>
<span class="t" style="left:526px;transform:scaleX(0.902);">944 МБ</span>
<span class="t" style="left:588px;">98 %</span>
<span class="t" style="left:664px;transform:scaleX(0.982);">Нет</span>
</div>
<div class="sb" style="left:0px;top:232px;width:730px"><div class="sbb" style="left:0px;width:16px"><svg width="8" height="9" viewBox="0 0 8 9" style="left:3px;top:2px"><path d="M5.5 1 L2 4.5 L5.5 8" fill="none" stroke="#3d5a94" stroke-width="2.2"/></svg></div><div class="sbt" style="left:17px;width:565px"><div class="grip" style="left:277px"></div></div><div class="sbb" style="left:712px;width:16px"><svg width="8" height="9" viewBox="0 0 8 9" style="left:4px;top:2px"><path d="M2.5 1 L6 4.5 L2.5 8" fill="none" stroke="#3d5a94" stroke-width="2.2"/></svg></div></div>
</div>
<div style="left:0;top:249px;width:729px;height:7px;background:#f4f2e6;border-right:1px solid #8a8878"></div>
<div style="left:0;top:256px;width:729px;height:1px;background:#747262"></div>
<div id="dp" style="left:0;top:257px;width:731px;height:322px">
<div class="dlab" style="left:0px;top:4px;width:100px;height:71px;"><div class="dclip">
<div class="ic" style="left:9px;top:4px"><svg width="16" height="16" viewBox="0 0 16 16" shape-rendering="crispEdges" style="left:0;top:0" ><rect x="2" y="2" width="12" height="1" fill="#404040"/><rect x="1" y="3" width="14" height="1" fill="#b0b0b0"/><rect x="0" y="4" width="15" height="2" fill="#7c7c7c"/><rect x="1" y="4" width="13" height="1" fill="#a8a8a8"/><rect x="15" y="2" width="1" height="8" fill="#101010"/><rect x="14" y="3" width="1" height="1" fill="#e8e8e8"/><rect x="14" y="5" width="1" height="1" fill="#e8e8e8"/><rect x="14" y="7" width="1" height="1" fill="#e8e8e8"/><rect x="0" y="6" width="15" height="3" fill="#8a8a8a"/><rect x="0" y="4" width="1" height="5" fill="#101010"/><rect x="1" y="6" width="5" height="1" fill="#101010"/><rect x="9" y="7" width="5" height="1" fill="#101010"/><rect x="3" y="7" width="3" height="2" fill="#c8c8c8"/><rect x="9" y="8" width="3" height="1" fill="#c0c0c0"/><rect x="1" y="9" width="5" height="1" fill="#101010"/><rect x="4" y="10" width="3" height="1" fill="#101010"/><rect x="9" y="9" width="5" height="1" fill="#101010"/><rect x="7" y="5" width="1" height="1" fill="#101010"/><rect x="7" y="6" width="1" height="6" fill="#d8dc90"/><rect x="6" y="6" width="1" height="5" fill="#303028"/><rect x="8" y="7" width="1" height="4" fill="#303028"/><rect x="7" y="12" width="1" height="1" fill="#101010"/></svg></div>
<span class="t" style="left:26px;top:7px;transform:scaleX(1.079);"><b>Диск 0</b></span>
<span class="t" style="top:20px;transform:scaleX(0.956);">Основной</span>
<span class="t" style="top:33px;transform:scaleX(0.973);">74,52 ГБ</span>
<span class="t" style="top:46px;transform:scaleX(1.014);">Подключен</span>
</div></div>
<div class="dbox" style="left:100px;top:4px;width:631px;height:71px;"></div>
<div class="part" style="left:101px;top:8px;width:297px;height:63px;"></div>
<div class="" style="left:101px;top:6px;width:297px;height:67px;border:3px solid #0b7b0b;"></div>
<div class="" style="left:105px;top:9px;width:288px;height:11px;background:#0000ff;"></div>
<div class="pw" style="left:109px;top:23px;width:282px;height:45px;">
<span class="t" style="top:3px;left:9px;transform:scaleX(1.104);"><b>(D:)</b></span>
<span class="t" style="top:16px;transform:scaleX(0.942);">19,53 ГБ NTFS</span>
<span class="t" style="top:29px;">Исправен (Загрузка)</span>
</div>
<div class="part" style="left:398px;top:8px;width:329px;height:63px;"></div>
<div class="" style="left:399px;top:9px;width:326px;height:11px;background:#000080;"></div>
<div class="pw" style="left:402px;top:23px;width:322px;height:45px;">
<span class="t" style="top:3px;transform:scaleX(1.057);"><b>DISK_2  (C:)</b></span>
<span class="t" style="top:16px;transform:scaleX(0.933);">54,99 ГБ NTFS</span>
<span class="t" style="top:29px;transform:scaleX(0.97);">Исправен (Система)</span>
</div>
<div class="dlab" style="left:0px;top:75px;width:100px;height:71px;"><div class="dclip">
<div class="ic" style="left:9px;top:4px"><svg width="16" height="16" viewBox="0 0 16 16" shape-rendering="crispEdges" style="left:0;top:0" ><rect x="1" y="7" width="8" height="1" fill="#909090"/><rect x="0" y="8" width="1" height="5" fill="#606060"/><rect x="1" y="8" width="13" height="1" fill="#f8f8f8"/><rect x="1" y="9" width="13" height="3" fill="#d4d4d4"/><rect x="14" y="8" width="1" height="6" fill="#101010"/><rect x="2" y="10" width="10" height="1" fill="#202020"/><rect x="2" y="11" width="10" height="1" fill="#f8f8f8"/><rect x="1" y="12" width="13" height="1" fill="#707070"/><rect x="1" y="13" width="14" height="1" fill="#101010"/><rect x="9" y="0" width="6" height="1" fill="#080850"/><rect x="8" y="1" width="1" height="7" fill="#080850"/><rect x="9" y="1" width="6" height="7" fill="#1424c0"/><rect x="15" y="1" width="1" height="7" fill="#000040"/><rect x="9" y="2" width="5" height="3" fill="#a0b4f8"/><rect x="9" y="2" width="5" height="1" fill="#d4e0ff"/><rect x="9" y="8" width="6" height="1" fill="#000040"/><rect x="10" y="6" width="1" height="1" fill="#8090e0"/><rect x="12" y="6" width="1" height="1" fill="#8090e0"/><rect x="14" y="6" width="1" height="1" fill="#8090e0"/></svg></div>
<span class="t" style="left:26px;top:7px;transform:scaleX(1.079);"><b>Диск 1</b></span>
<span class="t" style="top:20px;transform:scaleX(0.963);">Съемное устройство</span>
<span class="t" style="top:33px;transform:scaleX(0.902);">959 МБ</span>
<span class="t" style="top:46px;transform:scaleX(1.014);">Подключен</span>
</div></div>
<div class="dbox" style="left:100px;top:75px;width:387px;height:71px;"></div>
<div class="part" style="left:101px;top:79px;width:382px;height:63px;"></div>
<div class="" style="left:102px;top:80px;width:379px;height:11px;background:#000080;"></div>
<div class="pw" style="left:105px;top:94px;width:375px;height:45px;">
<span class="t" style="top:3px;transform:scaleX(1.058);"><b>FLASH -_-)  (G:)</b></span>
<span class="t" style="top:16px;transform:scaleX(0.95);">959 МБ FAT32</span>
<span class="t" style="top:29px;transform:scaleX(0.961);">Исправен</span>
</div>
<div class="dlab" style="left:0px;top:146px;width:100px;height:71px;"><div class="dclip">
<div class="ic" style="left:9px;top:4px"><svg width="16" height="16" viewBox="0 0 16 16" shape-rendering="crispEdges" style="left:0;top:0" ><rect x="1" y="8" width="8" height="1" fill="#909090"/><rect x="0" y="9" width="1" height="5" fill="#606060"/><rect x="1" y="9" width="13" height="1" fill="#f8f8f8"/><rect x="1" y="10" width="13" height="3" fill="#d4d4d4"/><rect x="14" y="9" width="1" height="6" fill="#101010"/><rect x="2" y="11" width="10" height="1" fill="#202020"/><rect x="2" y="12" width="10" height="1" fill="#f8f8f8"/><rect x="1" y="13" width="13" height="1" fill="#707070"/><rect x="1" y="14" width="14" height="1" fill="#101010"/><g shape-rendering="auto"><circle cx="10.5" cy="6" r="4.6" fill="#58c848" stroke="#30702c" stroke-width="0.8"/><path d="M10.5 6 L14.5 3.4 A3.9999999999999996 3.9999999999999996 0 0 1 14.299999999999999 8.2 Z" fill="#f0e4f0"/><path d="M10.5 6 L9.0 2.1000000000000005 A3.9999999999999996 3.9999999999999996 0 0 1 13.0 2.4000000000000004 Z" fill="#d8f0a0"/><circle cx="10.5" cy="6" r="1.5" fill="#fff" stroke="#101010" stroke-width="0.9"/></g></svg></div>
<span class="t" style="left:26px;top:7px;transform:scaleX(1.004);"><b>CD-ROM 0</b></span>
<span class="t" style="top:20px;transform:scaleX(0.889);">CD-ROM</span>
<span class="t" style="top:33px;transform:scaleX(0.902);">634 МБ</span>
<span class="t" style="top:46px;transform:scaleX(1.014);">Подключен</span>
</div></div>
<div class="dbox" style="left:100px;top:146px;width:364px;height:71px;"></div>
<div class="part" style="left:101px;top:150px;width:359px;height:63px;"></div>
<div class="" style="left:102px;top:151px;width:356px;height:11px;background:#000080;"></div>
<div class="pw" style="left:105px;top:165px;width:352px;height:45px;">
<span class="t" style="top:3px;transform:scaleX(1.039);"><b>CD N-5.10  (E:)</b></span>
<span class="t" style="top:16px;transform:scaleX(0.897);">634 МБ CDFS</span>
<span class="t" style="top:29px;transform:scaleX(0.961);">Исправен</span>
</div>
<div class="dlab" style="left:0px;top:217px;width:100px;height:71px;"><div class="dclip">
<div class="ic" style="left:9px;top:4px"><svg width="16" height="16" viewBox="0 0 16 16" shape-rendering="crispEdges" style="left:0;top:0" ><rect x="1" y="8" width="8" height="1" fill="#909090"/><rect x="0" y="9" width="1" height="5" fill="#606060"/><rect x="1" y="9" width="13" height="1" fill="#f8f8f8"/><rect x="1" y="10" width="13" height="3" fill="#d4d4d4"/><rect x="14" y="9" width="1" height="6" fill="#101010"/><rect x="2" y="11" width="10" height="1" fill="#202020"/><rect x="2" y="12" width="10" height="1" fill="#f8f8f8"/><rect x="1" y="13" width="13" height="1" fill="#707070"/><rect x="1" y="14" width="14" height="1" fill="#101010"/><g shape-rendering="auto"><circle cx="10.5" cy="6" r="4.6" fill="#58c848" stroke="#30702c" stroke-width="0.8"/><path d="M10.5 6 L14.5 3.4 A3.9999999999999996 3.9999999999999996 0 0 1 14.299999999999999 8.2 Z" fill="#f0e4f0"/><path d="M10.5 6 L9.0 2.1000000000000005 A3.9999999999999996 3.9999999999999996 0 0 1 13.0 2.4000000000000004 Z" fill="#d8f0a0"/><circle cx="10.5" cy="6" r="1.5" fill="#fff" stroke="#101010" stroke-width="0.9"/></g></svg></div>
<span class="t" style="left:26px;top:7px;transform:scaleX(1.004);"><b>CD-ROM 1</b></span>
<span class="t" style="top:20px;transform:scaleX(0.915);">DVD (F:)</span>
<span class="t" style="top:46px;transform:scaleX(0.987);">Нет носителя</span>
</div></div>
<div class="dbox" style="left:100px;top:217px;width:629px;height:71px;"></div>
</div>
<div id="leg">
<div style="left:5px;top:3px;width:10px;height:12px;background:#000080"></div>
<span class="t" style="left:21px;top:2px;transform:scaleX(0.996);">Основной раздел</span>
<div style="left:115px;top:3px;width:10px;height:12px;background:#008000"></div>
<span class="t" style="left:131px;top:2px;transform:scaleX(1.012);">Дополнительный раздел</span>
<div style="left:263px;top:3px;width:10px;height:12px;background:#0000ff"></div>
<span class="t" style="left:279px;top:2px;transform:scaleX(1.021);">Логический диск</span>
</div>
<div style="left:0;top:601px;width:731px;height:1px;background:#fff"></div>
</div>
<div id="status">
<div style="left:713px;top:2px;width:2px;height:19px;border-left:1px solid #c5c2b0;border-right:1px solid #fff"></div>
<div style="left:846px;top:2px;width:2px;height:19px;border-left:1px solid #c5c2b0;border-right:1px solid #fff"></div>
<div style="left:931px;top:2px;width:2px;height:19px;border-left:1px solid #c5c2b0;border-right:1px solid #fff"></div>
</div>
</div>
</body>
</html>
